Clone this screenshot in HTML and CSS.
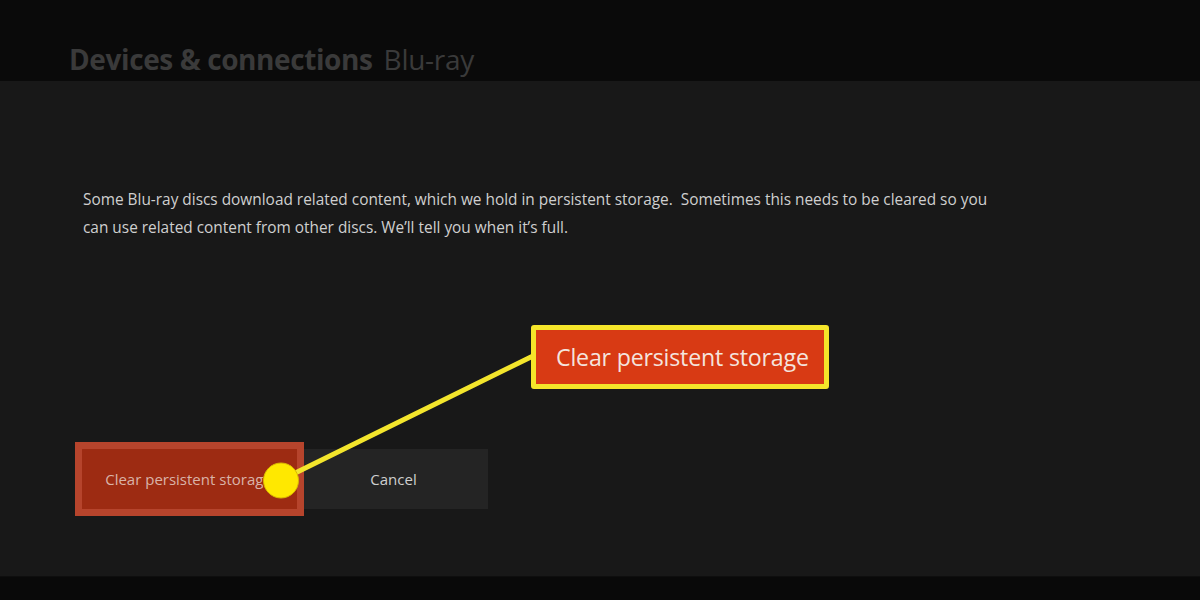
FILE: index.html
```html
<!DOCTYPE html>
<html>
<head>
<meta charset="utf-8">
<link rel="stylesheet" href="styles.css">
</head>
<body>
<div class="page">
  <header class="topbar">
    <h1 class="title"><span class="crumb">Devices &amp; connections</span><span class="sub">Blu-ray</span></h1>
  </header>
  <main class="content">
    <p class="desc">Some Blu-ray discs download related content, which we hold in persistent storage.&nbsp; Sometimes this needs to be cleared so you can use related content from other discs. We’ll tell you when it’s full.</p>
    <div class="actions">
      <button class="btn btn-primary"><span class="btn-inner">Clear persistent storage</span></button>
      <button class="btn btn-secondary">Cancel</button>
    </div>
  </main>
  <footer class="bottombar"></footer>

  <svg class="pointer" width="1200" height="600" viewBox="0 0 1200 600">
    <line x1="281" y1="480" x2="533" y2="356" stroke="#f3e52c" stroke-width="5" stroke-linecap="round"/>
    <circle cx="281" cy="480.5" r="17.5" fill="#ffe800" stroke="#d9b800" stroke-width="1"/>
  </svg>
  <div class="callout">Clear persistent storage</div>
</div>
</body>
</html>
```
FILE: styles.css
```css
* { box-sizing: border-box; }
html, body { margin: 0; padding: 0; }
body {
  background: #181818;
  font-family: "Open Sans", "Noto Sans", sans-serif;
}
.page {
  position: relative;
  width: 1200px;
  height: 600px;
  display: flex;
  flex-direction: column;
  overflow: hidden;
}
.topbar {
  height: 81px;
  background: #0a0a0a;
  padding: 0 0 0 69px;
  display: flex;
  align-items: flex-end;
}
.title {
  margin: 0 0 5px 0;
  font-size: 28px;
  line-height: 34px;
  color: #3a3a3a;
  font-weight: 400;
  white-space: nowrap;
}
.crumb {
  font-weight: 700;
  letter-spacing: -0.4px;
  margin-right: 11px;
}
.sub {
  font-weight: 400;
  letter-spacing: -0.3px;
}
.content {
  flex: 1;
  background: #181818;
  padding: 105px 0 0 83px;
  display: flex;
  flex-direction: column;
}
.desc {
  margin: 0;
  width: 915px;
  font-size: 15.4px;
  line-height: 28px;
  color: #cfcfcf;
  letter-spacing: 0;
}
.actions {
  margin-top: 200px;
  margin-left: -8px;
  display: flex;
  align-items: center;
}
.btn {
  border: 0;
  padding: 0;
  font-family: inherit;
  font-size: 15px;
  color: #cfcfcf;
}
.btn-primary {
  position: relative;
  z-index: 1;
  width: 229px;
  height: 74px;
  background: #b6442c;
  padding: 7px;
  display: flex;
}
.btn-inner {
  flex: 1;
  background: #9d2b12;
  display: flex;
  align-items: center;
  justify-content: center;
  color: #d9b3a8;
  padding-right: 2px;
}
.btn-secondary {
  width: 191px;
  height: 60px;
  margin-left: -7px;
  background: #242424;
  color: #cfcfcf;
  padding-left: 2px;
}
.bottombar {
  height: 24px;
  background: #090909;
  border-top: 1px solid #0e0e0e;
}
.pointer {
  position: absolute;
  left: 0;
  top: 0;
  z-index: 2;
}
.callout {
  position: absolute;
  z-index: 3;
  left: 531px;
  top: 325px;
  width: 298px;
  height: 64px;
  background: #d83a14;
  border: 5px solid #f5e52a;
  border-radius: 3px;
  color: #f4e4de;
  font-size: 23.2px;
  display: flex;
  align-items: center;
  padding-left: 20px;
  letter-spacing: -0.2px;
}
```
